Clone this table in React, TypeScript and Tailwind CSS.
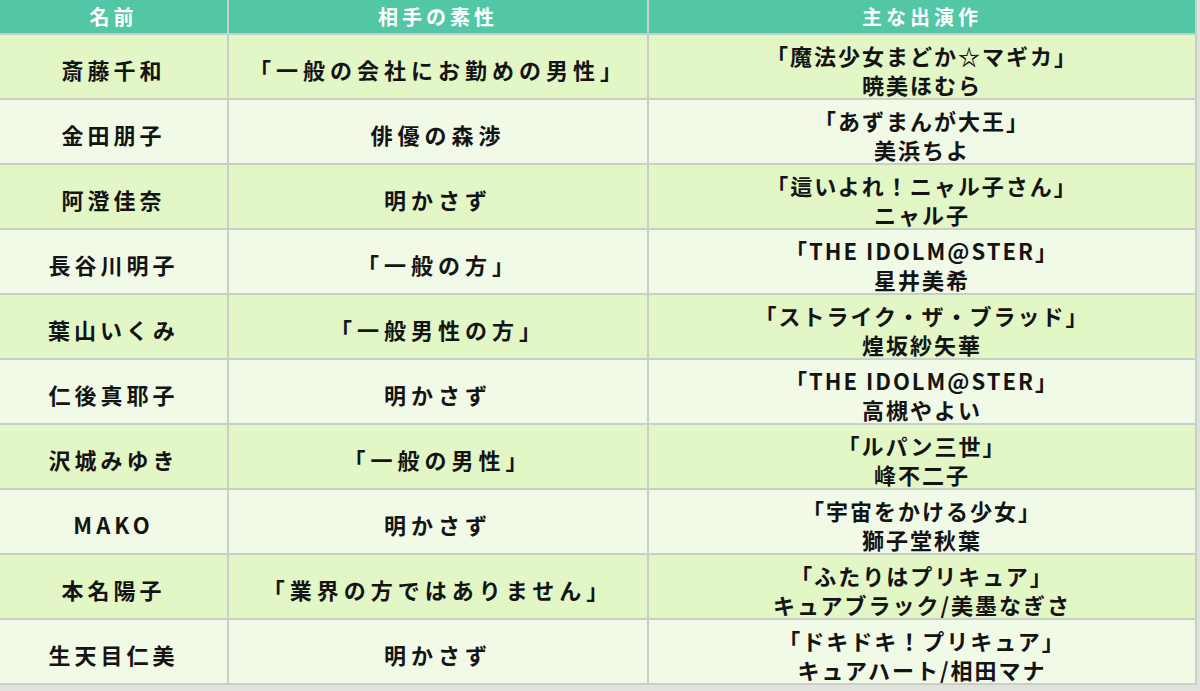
const rows: { name: string; partner: string; works: [string, string] }[] = [
  { name: '斎藤千和', partner: '「一般の会社にお勤めの男性」', works: ['「魔法少女まどか☆マギカ」', '暁美ほむら'] },
  { name: '金田朋子', partner: '俳優の森渉', works: ['「あずまんが大王」', '美浜ちよ'] },
  { name: '阿澄佳奈', partner: '明かさず', works: ['「這いよれ！ニャル子さん」', 'ニャル子'] },
  { name: '長谷川明子', partner: '「一般の方」', works: ['「THE IDOLM@STER」', '星井美希'] },
  { name: '葉山いくみ', partner: '「一般男性の方」', works: ['「ストライク・ザ・ブラッド」', '煌坂紗矢華'] },
  { name: '仁後真耶子', partner: '明かさず', works: ['「THE IDOLM@STER」', '高槻やよい'] },
  { name: '沢城みゆき', partner: '「一般の男性」', works: ['「ルパン三世」', '峰不二子'] },
  { name: 'MAKO', partner: '明かさず', works: ['「宇宙をかける少女」', '獅子堂秋葉'] },
  { name: '本名陽子', partner: '「業界の方ではありません」', works: ['「ふたりはプリキュア」', 'キュアブラック/美墨なぎさ'] },
  { name: '生天目仁美', partner: '明かさず', works: ['「ドキドキ！プリキュア」', 'キュアハート/相田マナ'] },
];

const font = { fontFamily: '"Noto Sans CJK JP", "Noto Sans", sans-serif' };

export default function App() {
  return (
    <div className="w-[1200px] h-[691px] bg-[#dfe3dc] overflow-hidden" style={font}>
      <div className="grid w-[1197px] grid-cols-[227px_418px_546px] gap-[2px] bg-[#c9cec6] pr-[2px] pb-[2px]">
        {['名前', '相手の素性', '主な出演作'].map((h) => (
          <div
            key={h}
            className="flex h-[33px] items-center justify-center bg-[#53c6a6] text-[20px] font-bold tracking-[4px] text-white"
          >
            {h}
          </div>
        ))}
        {rows.map((r, i) => {
          const bg = i % 2 === 0 ? 'bg-[#e2f6c6]' : 'bg-[#f1fae6]';
          return [
            <div
              key={r.name + 'n'}
              className={`${bg} flex h-[63px] items-center justify-center pt-[6px] text-[22px] font-bold tracking-[4px] text-[#141414]`}
            >
              {r.name}
            </div>,
            <div
              key={r.name + 'p'}
              className={`${bg} flex h-[63px] items-center justify-center pt-[6px] text-[22px] font-bold tracking-[5px] text-[#141414]`}
            >
              {r.partner}
            </div>,
            <div
              key={r.name + 'w'}
              className={`${bg} flex h-[63px] flex-col items-center justify-center pt-[6px] text-[22px] font-bold leading-[29px] tracking-[2px] text-[#141414]`}
            >
              <span>{r.works[0]}</span>
              <span>{r.works[1]}</span>
            </div>,
          ];
        })}
      </div>
    </div>
  );
}
